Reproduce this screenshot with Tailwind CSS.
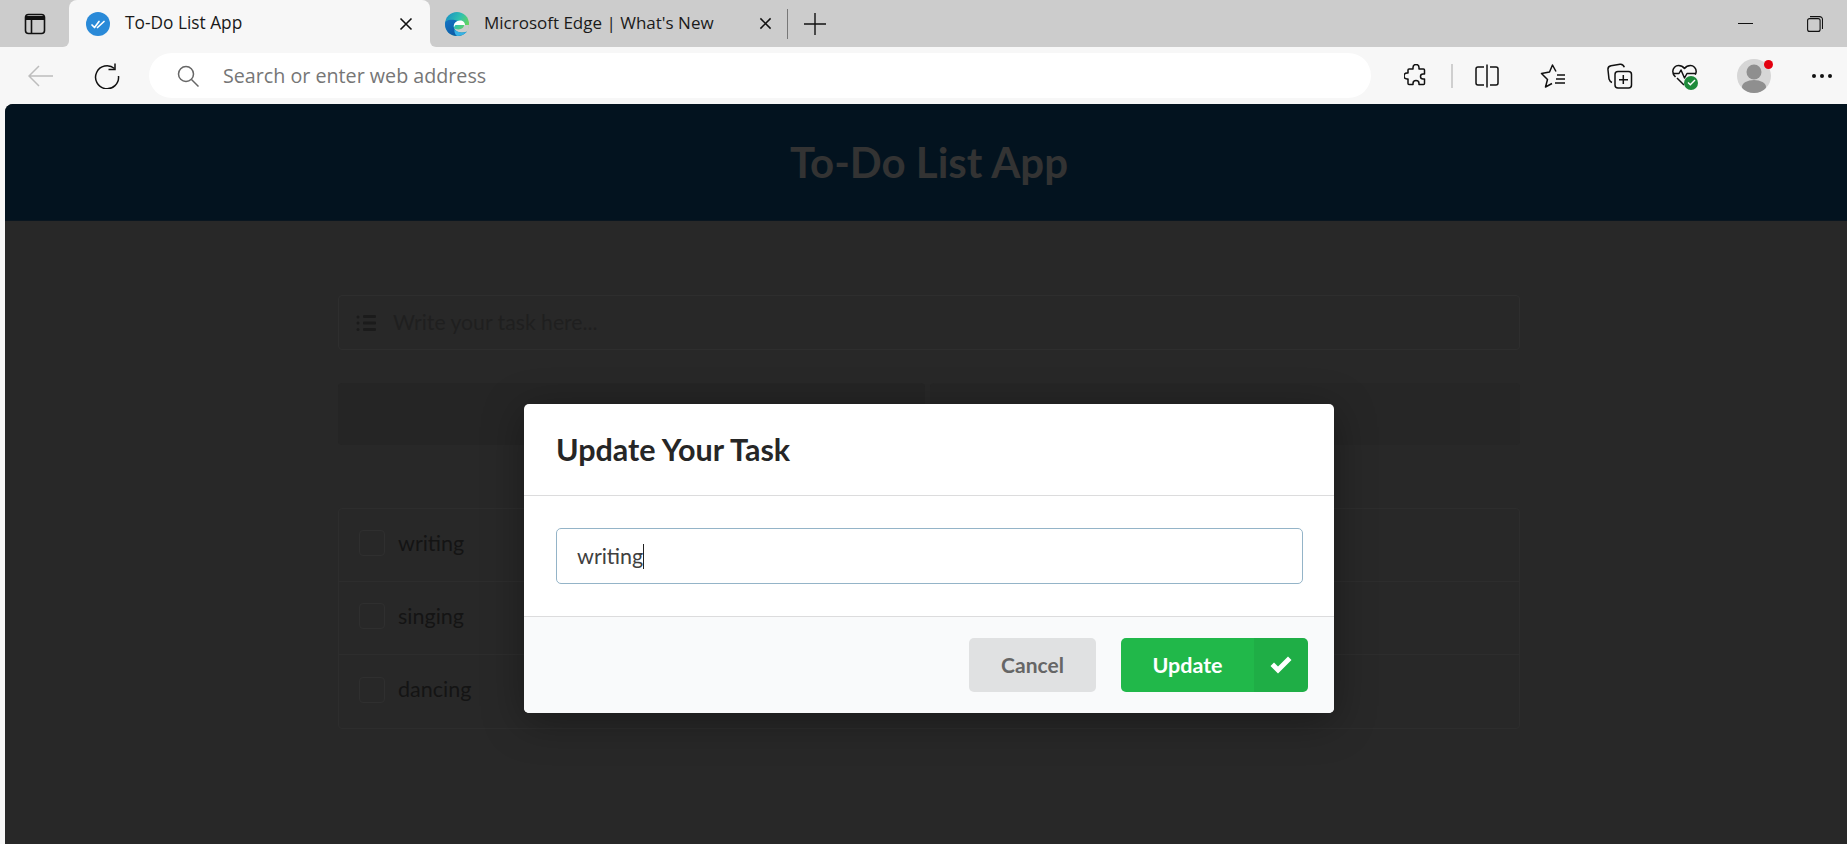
<!DOCTYPE html>
<html lang="en">
<head>
    <meta charset="UTF-8">
    <meta name="viewport" content="width=device-width, initial-scale=1.0">
    <title>To-Do List App</title>
    <script src="https://cdn.jsdelivr.net/npm/@tailwindcss/browser@4"></script>
</head>
<body class="relative h-screen overflow-hidden flex flex-col bg-[#f7f7f7] [font-family:'Open_Sans',sans-serif]">

    <!-- tab strip -->
    <div class="h-[47px] shrink-0 flex items-stretch text-[#1a1a1a]">
        <div class="w-[69px] shrink-0 bg-[#cccccc] rounded-br-md flex items-center justify-center">
            <svg width="22" height="22" viewBox="0 0 22 22" fill="none" stroke="#111" stroke-width="1.6"><rect x="1.5" y="1.5" width="19" height="19" rx="3"/><path d="M1.5 5h19" stroke-width="4"/><path d="M7.5 6v14"/></svg>
        </div>
        <div class="w-[361px] shrink-0 bg-[#cccccc]">
            <div class="h-full bg-[#f7f7f7] rounded-t-lg flex items-center pl-[17px] pr-[17px]">
                <svg width="24" height="24" viewBox="0 0 24 24" fill="none" class="shrink-0"><circle cx="12" cy="12" r="12" fill="#2a8ad8"/><path d="M6 13l2.5 2.5L13 9.5M11.500 15.500L18 9.500" stroke="#fff" stroke-width="1.7" stroke-linecap="round" stroke-linejoin="round"/></svg>
                <span class="ml-[15px] pb-[2px] text-[17.300px] whitespace-nowrap">To-Do List App</span>
                <svg width="14" height="14" viewBox="0 0 14 14" class="ml-auto" stroke="#111" stroke-width="1.6"><path d="M1.500 1.500l11 11M12.500 1.500l-11 11"/></svg>
            </div>
        </div>
        <div class="w-[348px] shrink-0 flex items-center pl-[15px] bg-[#cccccc] rounded-bl-md">
            <svg width="24" height="24" viewBox="0 0 24 24" class="shrink-0">
                <defs>
                    <linearGradient id="edgeTop" x1="0" y1="0" x2="1" y2=".6"><stop offset="0" stop-color="#1689c8"/><stop offset=".55" stop-color="#2fc0b0"/><stop offset="1" stop-color="#6fd84e"/></linearGradient>
                    <linearGradient id="edgeLow" x1="0" y1="0" x2="1" y2="1"><stop offset="0" stop-color="#1474c4"/><stop offset="1" stop-color="#0b4f98"/></linearGradient>
                </defs>
                <circle cx="12" cy="12" r="12" fill="url(#edgeTop)"/>
                <path d="M0 12c0 7 5 12 12 12 4 0 7-1.500 10-4.500-5 2-11 1-13-3.500-1-3 1-6 4-7C8 7 0 7 0 12z" fill="url(#edgeLow)"/>
                <path d="M9 15.500C8 11.500 11.500 8.500 15 8.500c3 0 5 2 5 4.500H10.500c-.7 .5-1.200 1.500-1.500 2.500z" fill="#fff"/>
                <path d="M24 13c0 2.500-1 5-2 6.500-5 2-11 1-13-3.500 1.500 2 8 2 9.500-1 .5-1 .5-1.500 .5-2z" fill="#cccccc"/>
                <path d="M9.500 17c2 3.500 7.500 4.500 12.500 2.500-2.500 3-6 4.500-10 4.500-2-1.500-3-4.500-2.500-7z" fill="#37b2e6"/>
            </svg>
            <span class="ml-[15px] pb-[2px] text-[17px] whitespace-nowrap">Microsoft Edge | What's New</span>
            <svg width="13" height="13" viewBox="0 0 14 14" class="ml-[45px]" stroke="#111" stroke-width="1.6"><path d="M1.500 1.500l11 11M12.500 1.500l-11 11"/></svg>
        </div>
        <div class="flex-1 bg-[#cccccc] flex items-center">
            <div class="w-px h-[30px] ml-[9px] bg-[#777]"></div>
            <svg width="22" height="22" viewBox="0 0 22 22" class="ml-[16px]" stroke="#111" stroke-width="1.4"><path d="M11 0v22M0 11h22"/></svg>
            <div class="ml-auto flex items-center pr-[24px] gap-[54px]">
                <div class="w-[15px] h-px bg-[#111]"></div>
                <svg width="16" height="16" viewBox="0 0 16 16" fill="none" stroke="#111" stroke-width="1.100"><rect x=".6" y="2.600" width="12.500" height="12.800" rx="2"/><path d="M3 .6h9.500a3 3 0 0 1 3 3V13"/></svg>
            </div>
        </div>
    </div>

    <!-- toolbar -->
    <div class="h-[57px] shrink-0 flex items-center">
        <svg width="26" height="22" viewBox="0 0 26 22" class="ml-[28px] shrink-0" fill="none" stroke="#bdbdbd" stroke-width="1.500"><path d="M25 11H1M11 1L1 11l10 10"/></svg>
        <svg width="26" height="26" viewBox="0 0 26 26" class="ml-[40px] shrink-0" fill="none" stroke="#111" stroke-width="1.500"><path d="M20.500 5.500A11.500 11.500 0 1 0 24.500 13"/><path d="M21 .5v6h-6.500"/></svg>
        <div class="ml-[29px] w-[1222px] h-[45px] shrink-0 rounded-full bg-white flex items-center pl-[28px]">
            <svg width="22" height="22" viewBox="0 0 22 22" fill="none" stroke="#666" stroke-width="1.500"><circle cx="9" cy="9" r="7.500"/><path d="M14.500 14.500l7 7"/></svg>
            <span class="ml-[24px] text-[19.700px] text-[#767676] whitespace-nowrap">Search or enter web address</span>
        </div>
        <!-- puzzle -->
        <svg width="24" height="24" viewBox="0 0 24 24" class="ml-[33px] shrink-0" fill="none" stroke="#111" stroke-width="1.500" stroke-linejoin="round"><path d="M9 3.500a3 3 0 0 1 6 0V5h4.500a1 1 0 0 1 1 1v4H19a2.500 2.500 0 0 0 0 5h1.500v4.500a1 1 0 0 1-1 1H15v-1a3 3 0 0 0-6 0v1H5a1 1 0 0 1-1-1V15H3a3 3 0 0 1 0-6h1V6a1 1 0 0 1 1-1h4z"/></svg>
        <div class="ml-[23px] w-[2px] h-[24px] bg-[#cfcfcf] shrink-0"></div>
        <!-- split screen -->
        <svg width="24" height="24" viewBox="0 0 24 24" class="ml-[22px] shrink-0" fill="none" stroke="#111" stroke-width="1.500"><path d="M9 3H3a2 2 0 0 0-2 2v14a2 2 0 0 0 2 2h6M15 3h6a2 2 0 0 1 2 2v14a2 2 0 0 1-2 2h-6M12 .5v23"/></svg>
        <!-- favorites -->
        <svg width="26" height="24" viewBox="0 0 26 24" class="ml-[41px] shrink-0" fill="none" stroke="#111" stroke-width="1.500" stroke-linejoin="round"><path d="M16 7.500L12.500 1 9.500 8 1.500 9.500l6 6-2 7.500L12 19.500M17 11h8M16 15h9M15 19h10"/></svg>
        <!-- collections -->
        <svg width="26" height="26" viewBox="0 0 26 26" class="ml-[41px] shrink-0" fill="none" stroke="#111" stroke-width="1.500"><rect x="8" y="8.500" width="16.500" height="16.500" rx="3"/><path d="M16.300 12v9M12 16.700h9"/><path d="M5 19.500c-1.500-.5-2.500-2-3-3.500L1 7c-.3-2.500 1-4 3-4.300L13 1.200c2-.3 3.500.7 4.300 3"/></svg>
        <!-- browser essentials -->
        <div class="relative ml-[39px] w-[26px] h-[26px] shrink-0">
            <svg width="25" height="24" viewBox="0 0 25 24" fill="none" stroke="#111" stroke-width="1.500" stroke-linejoin="round"><path d="M3.500 14C1.500 12 .8 10.500.8 8.500.8 5 3.500 2.500 6.500 2.500c2.500 0 4.500 1 6 3 1.500-2 3.500-3 6-3 3 0 5.700 2.500 5.700 6 0 1-.3 2-1 3.200"/><path d="M.8 10.500H7l2-3.500 3.500 8 2.500-4.500h9"/><path d="M5 15l7 7"/></svg>
            <div class="absolute right-0 bottom-[-1px] w-[14px] h-[14px] rounded-full bg-[#1d8a3a] flex items-center justify-center">
                <svg width="9" height="9" viewBox="0 0 9 9" fill="none" stroke="#fff" stroke-width="1.400"><path d="M1 4.500l2.300 2.300L8 2"/></svg>
            </div>
        </div>
        <!-- profile -->
        <div class="relative ml-[39px] w-[34px] h-[34px] shrink-0 rounded-full bg-[#d6d6d6]">
            <svg width="34" height="34" viewBox="0 0 34 34" class="rounded-full"><circle cx="17" cy="13" r="7.500" fill="#8f8f8f"/><ellipse cx="17" cy="28" rx="12" ry="7" fill="#8f8f8f"/></svg>
            <div class="absolute right-[-2px] top-[1px] w-[9px] h-[9px] rounded-full bg-[#e3000f]"></div>
        </div>
        <div class="ml-[41px] flex gap-[4px] shrink-0">
            <div class="w-[4px] h-[4px] rounded-full bg-[#111]"></div>
            <div class="w-[4px] h-[4px] rounded-full bg-[#111]"></div>
            <div class="w-[4px] h-[4px] rounded-full bg-[#111]"></div>
        </div>
    </div>

    <!-- dimmed page -->
    <div class="ml-[5px] flex-1 rounded-tl-lg overflow-hidden bg-[#282828] [font-family:Lato,sans-serif]">
        <div class="h-[117px] bg-[#03131f] border-b border-[#0a1620] flex items-center justify-center pl-[6px]">
            <h1 class="text-[42px] font-bold text-[#333333]">To-Do List App</h1>
        </div>
        <div class="ml-[333px] w-[1182px] pt-[74px]">
            <div class="h-[55px] border border-[#2e2e2e] rounded flex items-center pl-[17px]">
                <svg width="20" height="18" viewBox="0 0 20 18" fill="#1b1b1b"><rect x="7" y="1" width="13" height="3" rx="1"/><rect x="7" y="7.500" width="13" height="3" rx="1"/><rect x="7" y="14" width="13" height="3" rx="1"/><circle cx="2" cy="3" r="1.500"/><circle cx="2" cy="9" r="1.500"/><circle cx="2" cy="15.500" r="1.500"/></svg>
                <span class="ml-[17px] text-[21.200px] text-[#1f1f1f]">Write your task here...</span>
            </div>
            <div class="mt-[33px] flex gap-[5px]">
                <div class="w-[587px] h-[62px] rounded bg-[#252525]"></div>
                <div class="w-[590px] h-[62px] rounded bg-[#262626]"></div>
            </div>
            <div class="mt-[63px] border border-[#2d2d2d] rounded text-[21.500px] text-[#141414]">
                <div class="h-[73px] flex items-center pl-[20px] pb-[4px] border-b border-[#2d2d2d]">
                    <div class="w-[26px] h-[26px] rounded border border-[#2f2f2f]"></div>
                    <span class="ml-[13px]">writing</span>
                </div>
                <div class="h-[73px] flex items-center pl-[20px] pb-[4px] border-b border-[#2d2d2d]">
                    <div class="w-[26px] h-[26px] rounded border border-[#2f2f2f]"></div>
                    <span class="ml-[13px]">singing</span>
                </div>
                <div class="h-[73px] flex items-center pl-[20px] pb-[4px]">
                    <div class="w-[26px] h-[26px] rounded border border-[#2f2f2f]"></div>
                    <span class="ml-[13px]">dancing</span>
                </div>
            </div>
        </div>
    </div>

    <!-- update modal -->
    <div class="absolute left-[524px] top-[404px] w-[810px] h-[309px] bg-white rounded-[5px] shadow-[0_8px_40px_rgba(0,0,0,0.35)] flex flex-col [font-family:Lato,sans-serif]">
        <div class="h-[92px] shrink-0 border-b border-[#dcdcdd] flex items-center pl-[32px]">
            <h2 class="text-[30.500px] font-bold text-[#262626]">Update Your Task</h2>
        </div>
        <div class="h-[120px] shrink-0 pl-[32px] pr-[31px] flex items-center">
            <div class="w-full h-[56px] border border-[#94b4c8] rounded-[5px] flex items-center pl-[20px] text-[21.500px] text-[#404040]">
                <span>writing</span><span class="w-px h-[25px] bg-[#222]"></span>
            </div>
        </div>
        <div class="flex-1 bg-[#f9fafb] border-t border-[#dcdcdd] rounded-b-[5px] flex items-center justify-end pr-[26px] gap-[25px]">
            <div class="w-[127px] h-[54px] rounded-[5px] bg-[#e0e1e2] flex items-center justify-center text-[21px] font-bold text-[#666666]">Cancel</div>
            <div class="w-[187px] h-[54px] rounded-[5px] bg-[#21b84a] flex items-center text-white text-[21.500px] font-bold">
                <span class="flex-1 text-center">Update</span>
                <span class="w-[54px] h-full rounded-r-[5px] bg-black/5 flex items-center justify-center">
                    <svg width="22" height="18" viewBox="0 0 22 18" fill="#fff"><path d="M8 17.500L.5 10l3.500-3.500L8 10.500 18 .5 21.500 4z"/></svg>
                </span>
            </div>
        </div>
    </div>

</body>
</html>
